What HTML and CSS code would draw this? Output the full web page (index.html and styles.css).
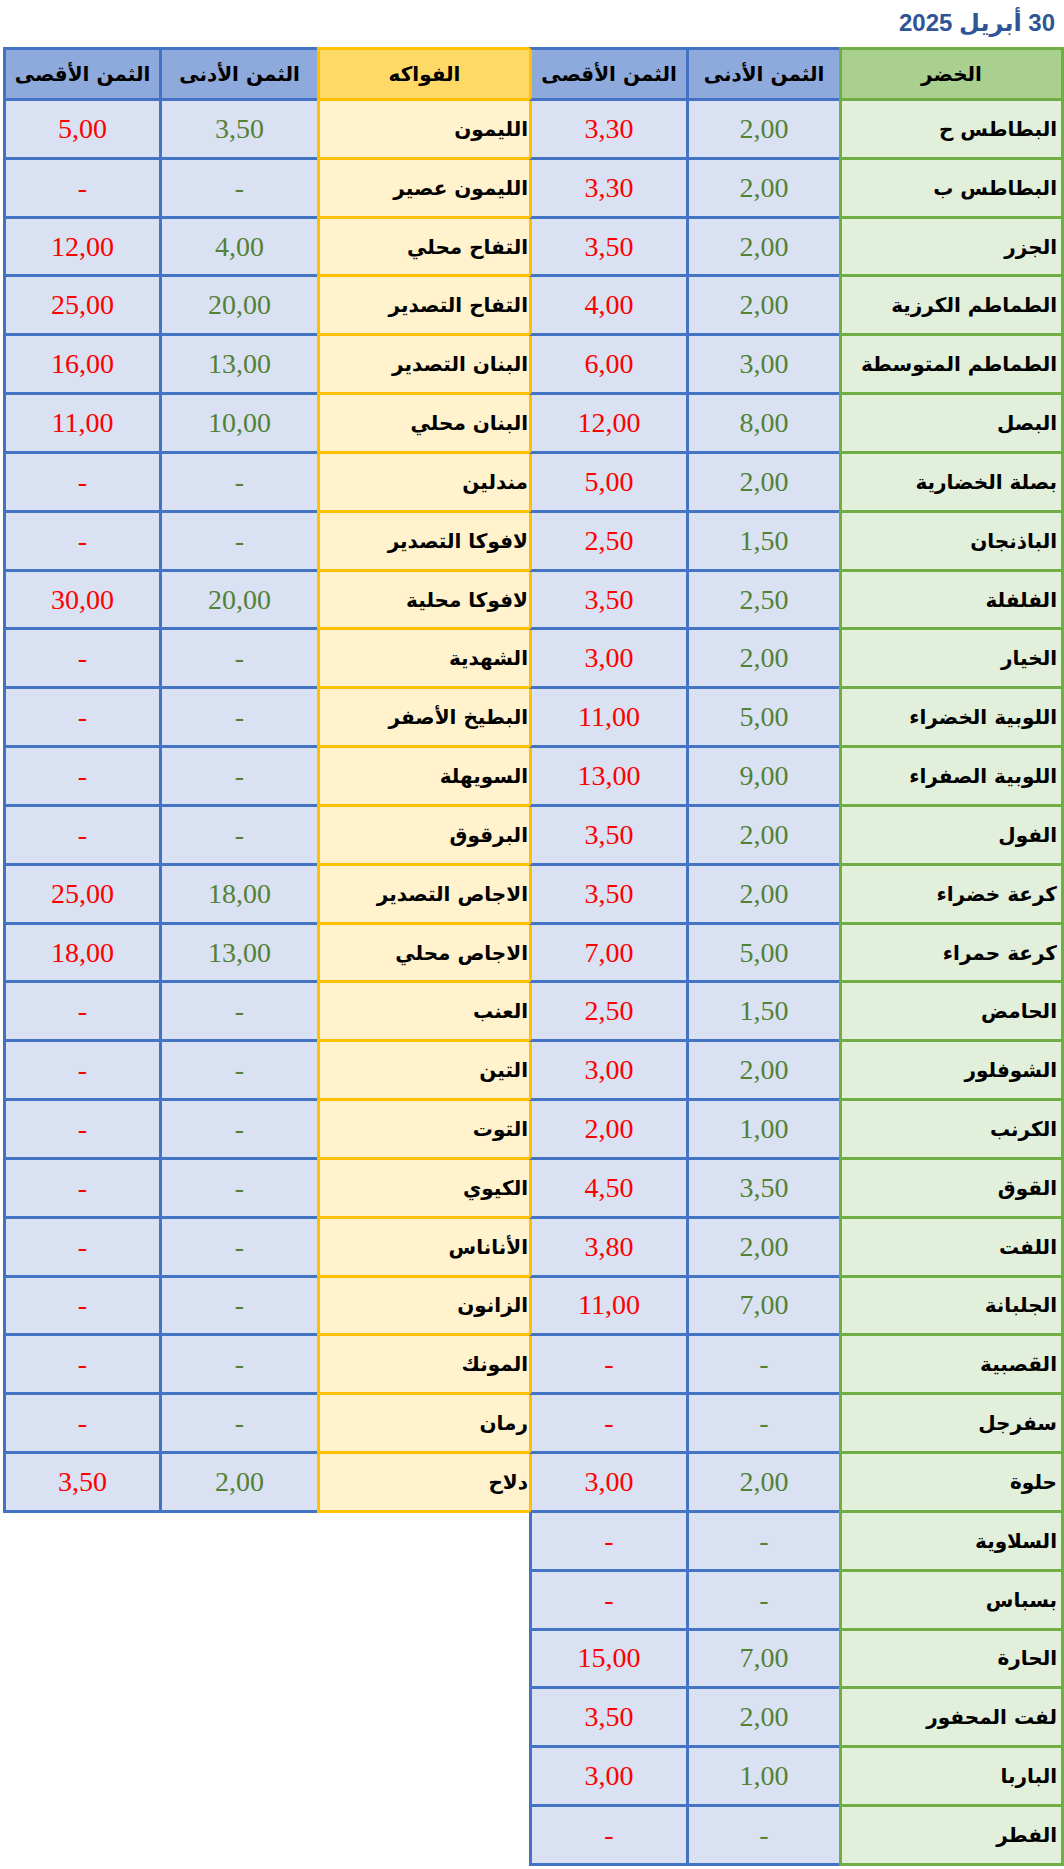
FILE: index.html
```html
<!DOCTYPE html>
<html lang="ar" dir="rtl">
<head>
<meta charset="utf-8">
<title>أسعار الخضر والفواكه</title>
<link rel="stylesheet" href="styles.css">
</head>
<body>
<h1 class="title">30 أبريل 2025</h1>
<table class="prices">
<colgroup>
<col class="w-veg"><col class="w-vmin"><col class="w-vmax"><col class="w-fruit"><col class="w-fmin"><col class="w-fmax">
</colgroup>
<thead>
<tr class="head">
<th class="veg">الخضر</th><th class="vmin">الثمن الأدنى</th><th class="vmax">الثمن الأقصى</th><th class="fruit">الفواكه</th><th class="fmin">الثمن الأدنى</th><th class="fmax">الثمن الأقصى</th>
</tr>
</thead>
<tbody>
<tr><td class="veg">البطاطس ح</td><td class="vmin">2,00</td><td class="vmax">3,30</td><td class="fruit">الليمون</td><td class="fmin">3,50</td><td class="fmax">5,00</td></tr>
<tr><td class="veg">البطاطس ب</td><td class="vmin">2,00</td><td class="vmax">3,30</td><td class="fruit">الليمون عصير</td><td class="fmin">-</td><td class="fmax">-</td></tr>
<tr><td class="veg">الجزر</td><td class="vmin">2,00</td><td class="vmax">3,50</td><td class="fruit">التفاح محلي</td><td class="fmin">4,00</td><td class="fmax">12,00</td></tr>
<tr><td class="veg">الطماطم الكرزية</td><td class="vmin">2,00</td><td class="vmax">4,00</td><td class="fruit">التفاح التصدير</td><td class="fmin">20,00</td><td class="fmax">25,00</td></tr>
<tr><td class="veg">الطماطم المتوسطة</td><td class="vmin">3,00</td><td class="vmax">6,00</td><td class="fruit">البنان التصدير</td><td class="fmin">13,00</td><td class="fmax">16,00</td></tr>
<tr><td class="veg">البصل</td><td class="vmin">8,00</td><td class="vmax">12,00</td><td class="fruit">البنان محلي</td><td class="fmin">10,00</td><td class="fmax">11,00</td></tr>
<tr><td class="veg">بصلة الخضارية</td><td class="vmin">2,00</td><td class="vmax">5,00</td><td class="fruit">مندلين</td><td class="fmin">-</td><td class="fmax">-</td></tr>
<tr><td class="veg">الباذنجان</td><td class="vmin">1,50</td><td class="vmax">2,50</td><td class="fruit">لافوكا التصدير</td><td class="fmin">-</td><td class="fmax">-</td></tr>
<tr><td class="veg">الفلفلة</td><td class="vmin">2,50</td><td class="vmax">3,50</td><td class="fruit">لافوكا محلية</td><td class="fmin">20,00</td><td class="fmax">30,00</td></tr>
<tr><td class="veg">الخيار</td><td class="vmin">2,00</td><td class="vmax">3,00</td><td class="fruit">الشهدية</td><td class="fmin">-</td><td class="fmax">-</td></tr>
<tr><td class="veg">اللوبية الخضراء</td><td class="vmin">5,00</td><td class="vmax">11,00</td><td class="fruit">البطيخ الأصفر</td><td class="fmin">-</td><td class="fmax">-</td></tr>
<tr><td class="veg">اللوبية الصفراء</td><td class="vmin">9,00</td><td class="vmax">13,00</td><td class="fruit">السويهلة</td><td class="fmin">-</td><td class="fmax">-</td></tr>
<tr><td class="veg">الفول</td><td class="vmin">2,00</td><td class="vmax">3,50</td><td class="fruit">البرقوق</td><td class="fmin">-</td><td class="fmax">-</td></tr>
<tr><td class="veg">كرعة خضراء</td><td class="vmin">2,00</td><td class="vmax">3,50</td><td class="fruit">الاجاص التصدير</td><td class="fmin">18,00</td><td class="fmax">25,00</td></tr>
<tr><td class="veg">كرعة حمراء</td><td class="vmin">5,00</td><td class="vmax">7,00</td><td class="fruit">الاجاص محلي</td><td class="fmin">13,00</td><td class="fmax">18,00</td></tr>
<tr><td class="veg">الحامض</td><td class="vmin">1,50</td><td class="vmax">2,50</td><td class="fruit">العنب</td><td class="fmin">-</td><td class="fmax">-</td></tr>
<tr><td class="veg">الشوفلور</td><td class="vmin">2,00</td><td class="vmax">3,00</td><td class="fruit">التين</td><td class="fmin">-</td><td class="fmax">-</td></tr>
<tr><td class="veg">الكرنب</td><td class="vmin">1,00</td><td class="vmax">2,00</td><td class="fruit">التوت</td><td class="fmin">-</td><td class="fmax">-</td></tr>
<tr><td class="veg">القوق</td><td class="vmin">3,50</td><td class="vmax">4,50</td><td class="fruit">الكيوي</td><td class="fmin">-</td><td class="fmax">-</td></tr>
<tr><td class="veg">اللفت</td><td class="vmin">2,00</td><td class="vmax">3,80</td><td class="fruit">الأناناس</td><td class="fmin">-</td><td class="fmax">-</td></tr>
<tr><td class="veg">الجلبانة</td><td class="vmin">7,00</td><td class="vmax">11,00</td><td class="fruit">الزانون</td><td class="fmin">-</td><td class="fmax">-</td></tr>
<tr><td class="veg">القصبية</td><td class="vmin">-</td><td class="vmax">-</td><td class="fruit">المونك</td><td class="fmin">-</td><td class="fmax">-</td></tr>
<tr><td class="veg">سفرجل</td><td class="vmin">-</td><td class="vmax">-</td><td class="fruit">رمان</td><td class="fmin">-</td><td class="fmax">-</td></tr>
<tr><td class="veg">حلوة</td><td class="vmin">2,00</td><td class="vmax">3,00</td><td class="fruit">دلاح</td><td class="fmin">2,00</td><td class="fmax">3,50</td></tr>
<tr><td class="veg">السلاوية</td><td class="vmin">-</td><td class="vmax edge">-</td><td class="blank" colspan="3"></td></tr>
<tr><td class="veg">بسباس</td><td class="vmin">-</td><td class="vmax edge">-</td><td class="blank" colspan="3"></td></tr>
<tr><td class="veg">الحارة</td><td class="vmin">7,00</td><td class="vmax edge">15,00</td><td class="blank" colspan="3"></td></tr>
<tr><td class="veg">لفت المحفور</td><td class="vmin">2,00</td><td class="vmax edge">3,50</td><td class="blank" colspan="3"></td></tr>
<tr><td class="veg">الباربا</td><td class="vmin">1,00</td><td class="vmax edge">3,00</td><td class="blank" colspan="3"></td></tr>
<tr><td class="veg">الفطر</td><td class="vmin">-</td><td class="vmax edge">-</td><td class="blank" colspan="3"></td></tr>
</tbody>
</table>
</body>
</html>
```
FILE: styles.css
```css
html, body {
  margin: 0;
  padding: 0;
  background: #ffffff;
}

body {
  font-family: "DejaVu Sans", sans-serif;
}

.title {
  margin: 0;
  height: 47px;
  line-height: 46px;
  padding-right: 9px;
  font-family: "Liberation Sans", "DejaVu Sans", sans-serif;
  font-size: 24px;
  font-weight: bold;
  color: #2f5597;
  text-align: right;
}

.prices {
  direction: rtl;
  table-layout: fixed;
  border-collapse: separate;
  border-spacing: 0;
  width: 1061px;
  margin-left: 2px;
}

.w-veg { width: 225px; }
.w-vmin { width: 153px; }
.w-vmax { width: 157px; }
.w-fruit { width: 212px; }
.w-fmin { width: 158px; }
.w-fmax { width: 156px; }

.prices tr { height: 58.83px; }
.prices tr.head { height: 54px; }

.prices th,
.prices td {
  box-sizing: border-box;
  padding: 0;
  border-style: solid;
  border-width: 0 0 3px 3px;
  vertical-align: middle;
}

.prices th {
  border-top-width: 3px;
  font-family: "DejaVu Sans", sans-serif;
  font-weight: bold;
  font-size: 20px;
  color: #000;
  text-align: center;
}

.prices td.veg,
.prices td.fruit {
  font-family: "DejaVu Sans", sans-serif;
  font-weight: bold;
  font-size: 20px;
  color: #000;
  text-align: right;
}

.prices td.veg { padding-right: 4px; }
.prices td.fruit { padding-right: 1px; }

.prices td.vmin,
.prices td.vmax,
.prices td.fmin,
.prices td.fmax {
  font-family: "Liberation Serif", serif;
  font-size: 28px;
  text-align: center;
}

.prices td.vmin,
.prices td.fmin { color: #548235; }
.prices td.vmax,
.prices td.fmax { color: #ff0000; }

/* column colours */
.prices .veg {
  border-color: #70ad47;
  border-right-width: 3px;
}
.prices th.veg { background: #a9d08e; }
.prices td.veg { background: #e2efda; }

.prices .vmin,
.prices .vmax,
.prices .fmin,
.prices .fmax { border-color: #4472c4; }
.prices th.vmin, .prices th.vmax, .prices th.fmin, .prices th.fmax { background: #8ea9db; }
.prices td.vmin, .prices td.vmax, .prices td.fmin, .prices td.fmax { background: #d9e1f2; }

.prices .vmax { border-left-color: #ffc000; }
.prices .vmax.edge { border-left-color: #4472c4; }

.prices .fruit { border-color: #ffc000; }
.prices th.fruit { background: #ffd966; }
.prices td.fruit { background: #fff2cc; }

.prices td.blank {
  border-width: 0;
  background: #ffffff;
}
```
